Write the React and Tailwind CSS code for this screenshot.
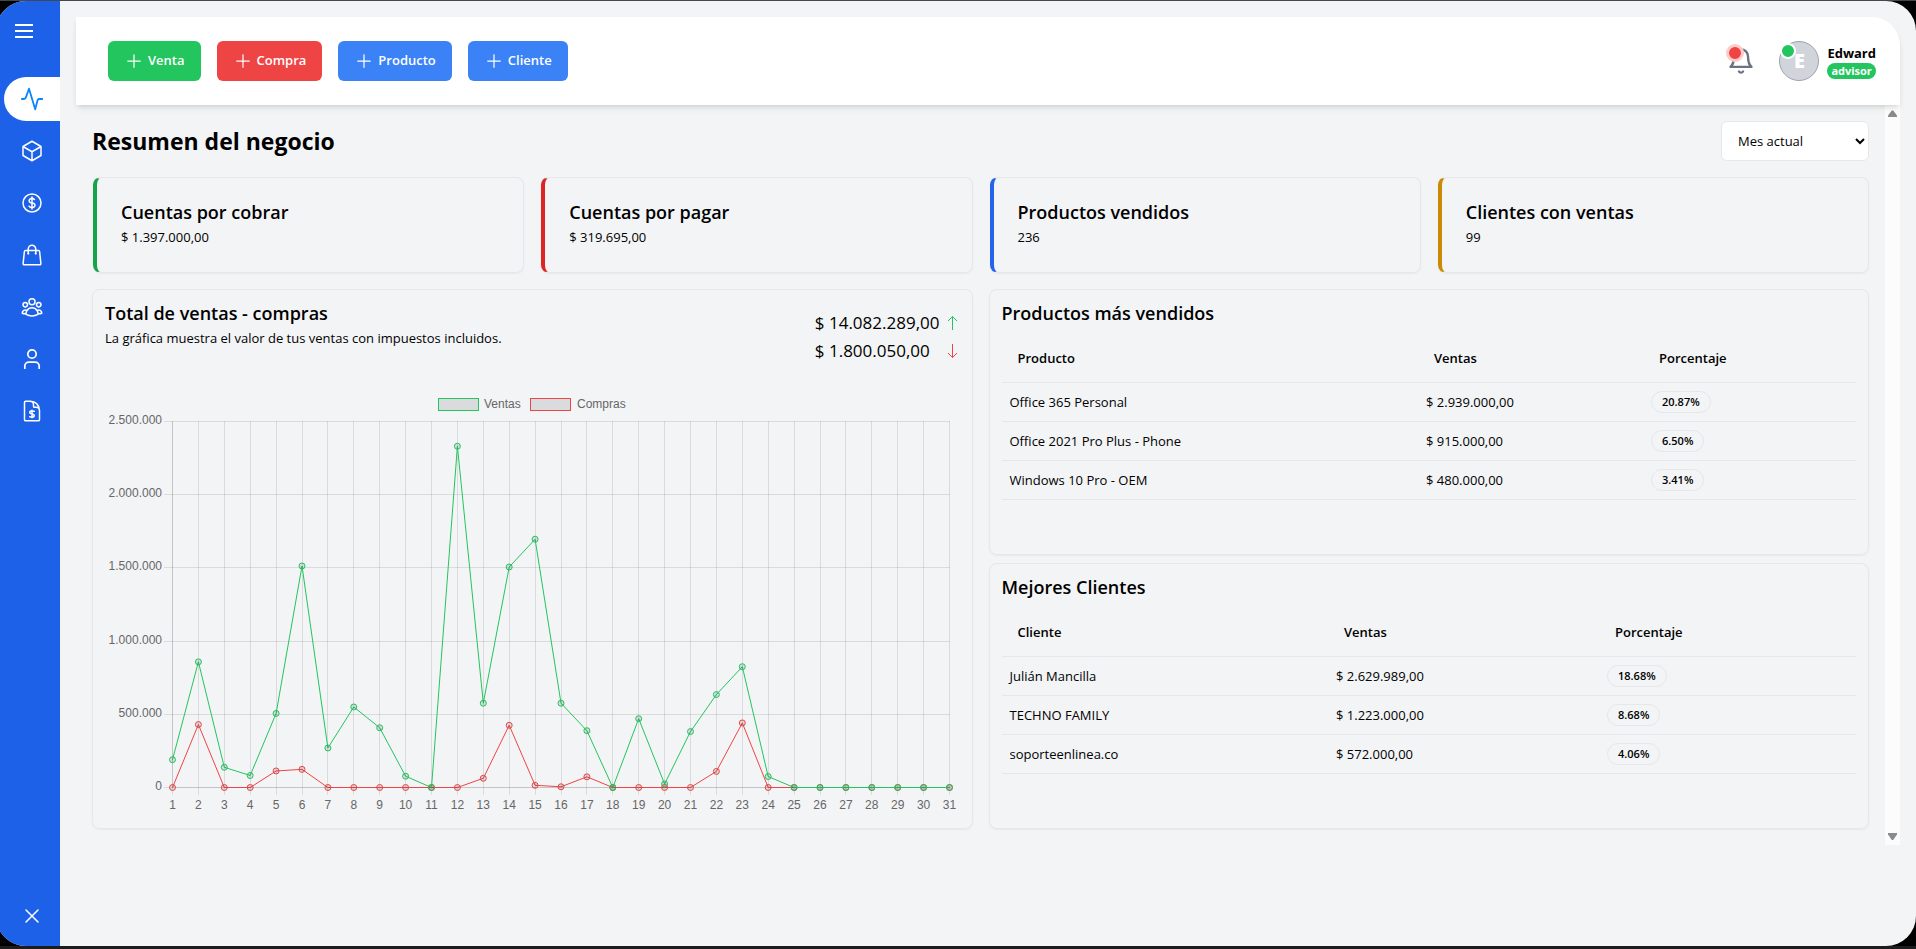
import { useLayoutEffect, useRef, useState } from "react";
import {
  HiOutlineCube,
  HiOutlineCurrencyDollar,
  HiOutlineShoppingBag,
  HiOutlineUserGroup,
  HiOutlineDocumentCurrencyDollar,
  HiOutlineXMark,
  HiOutlinePlus,
} from "react-icons/hi2";
import { FiBell } from "react-icons/fi";

function PulseIcon() {
  return (
    <svg viewBox="0 0 24 24" className="size-6" fill="none" stroke="#0a84ff" strokeWidth="1.8" strokeLinejoin="round">
      <path d="M1.2 12h2.6c1.1 0 1.7-.3 2-1.4L9 1.7l6.2 20.6 2.3-8.7c.3-1.2.8-1.6 1.7-1.6h3.7" />
    </svg>
  );
}

function UserIcon() {
  return (
    <svg viewBox="0 0 24 24" className="size-6" fill="none" stroke="currentColor" strokeWidth="1.7">
      <circle cx="12" cy="7" r="4.2" />
      <path d="M19.2 22v-2.8a4 4 0 0 0-4-4H8.800a4 4 0 0 0-4 4V22" />
    </svg>
  );
}

function MenuIcon() {
  return (
    <svg viewBox="0 0 24 24" className="size-6" fill="none" stroke="currentColor" strokeWidth="2">
      <path d="M3 6h18M3 12h18M3 18h18" />
    </svg>
  );
}

const NAV = [
  { label: "Productos", icon: <HiOutlineCube className="size-6" /> },
  { label: "Ventas", icon: <HiOutlineCurrencyDollar className="size-6" /> },
  { label: "Compras", icon: <HiOutlineShoppingBag className="size-6" /> },
  { label: "Clientes", icon: <HiOutlineUserGroup className="size-6" /> },
  { label: "Usuario", icon: <UserIcon /> },
  { label: "Facturas", icon: <HiOutlineDocumentCurrencyDollar className="size-6" /> },
];

function Sidebar() {
  return (
    <aside className="flex w-16 shrink-0 flex-col bg-[#1d61e8] text-white">
      <button type="button" aria-label="Menú" className="mt-[18px] ml-4 size-6">
        <MenuIcon />
      </button>
      <nav className="mt-[34px] ml-2 flex flex-col gap-2">
        <a href="#" aria-label="Resumen" className="flex h-11 items-center rounded-l-full bg-white pl-4">
          <PulseIcon />
        </a>
        {NAV.map((item) => (
          <a key={item.label} href="#" aria-label={item.label} className="flex h-11 items-center pl-4">
            {item.icon}
          </a>
        ))}
      </nav>
      <button type="button" aria-label="Cerrar sesión" className="mt-auto mb-[18px] ml-6 size-6">
        <HiOutlineXMark className="size-6" />
      </button>
    </aside>
  );
}

const ACTIONS = [
  { label: "Venta", color: "bg-[#22c55e]" },
  { label: "Compra", color: "bg-[#ef4444]" },
  { label: "Producto", color: "bg-[#3b82f6]" },
  { label: "Cliente", color: "bg-[#3b82f6]" },
];

function Header() {
  return (
    <header className="relative z-10 flex h-[88px] items-center justify-between rounded-tr-[28px] bg-white pr-6 pl-8 shadow-md">
      <div className="flex gap-4">
        {ACTIONS.map((a) => (
          <button
            key={a.label}
            type="button"
            className={`flex h-10 items-center gap-1 rounded-md px-4 text-[13px] font-semibold text-white ${a.color}`}
          >
            <HiOutlinePlus className="size-5" />
            {a.label}
          </button>
        ))}
      </div>
      <div className="flex items-center">
        <button type="button" aria-label="Notificaciones" className="relative mr-6 size-7 text-[#6b7280]">
          <FiBell className="size-7" />
          <span className="absolute -top-[3px] -left-px size-[18px] rounded-full border-3 border-[#fecaca] bg-[#ef4444]" />
        </button>
        <div className="relative mr-2 flex size-10 items-center justify-center rounded-full border border-[#9ca3af] bg-[#d1d5db] text-xl font-extrabold text-white">
          E
          <span className="absolute top-px left-0 size-4 rounded-full border-2 border-white bg-[#22c55e]" />
        </div>
        <div className="flex flex-col items-start">
          <span className="text-[13px] leading-5 font-bold">Edward</span>
          <span className="rounded-full bg-[#22c55e] px-1 text-[11px] leading-4 font-bold text-white">advisor</span>
        </div>
      </div>
    </header>
  );
}

const STATS = [
  { title: "Cuentas por cobrar", value: "$ 1.397.000,00", accent: "border-l-[#16a34a]" },
  { title: "Cuentas por pagar", value: "$ 319.695,00", accent: "border-l-[#dc2626]" },
  { title: "Productos vendidos", value: "236", accent: "border-l-[#2563eb]" },
  { title: "Clientes con ventas", value: "99", accent: "border-l-[#ca8a04]" },
];

const VENTAS = [
  190000, 858000, 138000, 82000, 506000, 1513000, 270000, 550000, 408000, 77000, 0, 2331000, 576000, 1506000, 1696000,
  576000, 388000, 0, 470000, 24000, 382000, 635000, 825000, 75000, 0, 0, 0, 0, 0, 0, 0,
];
const COMPRAS = [
  0, 430000, 0, 0, 113000, 124000, 0, 0, 0, 0, 0, 0, 63000, 425000, 15000, 5000, 73000, 0, 0, 0, 0, 110000, 441000, 0, 0,
  0, 0, 0, 0, 0, 0,
];
const TICKS = ["0", "500.000", "1.000.000", "1.500.000", "2.000.000", "2.500.000"];
const MAX = 2500000;

function SalesChart() {
  const ref = useRef(null);
  const [w, setW] = useState(854);
  useLayoutEffect(() => {
    const measure = () => setW(Math.floor(ref.current.getBoundingClientRect().width));
    measure();
    const observer = new ResizeObserver(measure);
    observer.observe(ref.current);
    return () => observer.disconnect();
  }, []);

  const h = Math.round(w / 2);
  const left = 67;
  const right = w - 10;
  const top = 32;
  const bottom = h - 29;
  const px = (i) => left + ((right - left) * i) / 30;
  const py = (v) => bottom - ((bottom - top) * v) / MAX;
  const snap = (n) => Math.round(n) + 0.5;
  const line = (values) => values.map((v, i) => `${px(i) + 0.5},${py(v) + 0.5}`).join(" ");
  const mid = Math.round(w / 2) - 94;

  return (
    <div ref={ref} className="w-full">
      <svg
        width={w}
        height={h}
        role="img"
        aria-label="Ventas y compras por día"
        className="block font-['Liberation_Sans',Arial,sans-serif] text-xs"
      >
        <g fill="#0000001a" strokeWidth="1">
          <rect x={mid + 0.5} y="9.5" width="40" height="12" stroke="#22c55e" />
          <rect x={mid + 92.5} y="9.5" width="40" height="12" stroke="#ef4444" />
        </g>
        <g fill="#666666">
          <text x={mid + 46} y="19">Ventas</text>
          <text x={mid + 139} y="19">Compras</text>
        </g>
        <g stroke="#0000001a">
          {TICKS.map((t, i) => (
            <line key={t} x1={left - 8} x2={right + 1} y1={snap(py(i * 500000))} y2={snap(py(i * 500000))} />
          ))}
          {VENTAS.map((_, i) => (
            <line key={i} x1={snap(px(i))} x2={snap(px(i))} y1={top} y2={bottom + 8} />
          ))}
          <line x1={left + 0.5} x2={left + 0.5} y1={top} y2={bottom} />
          <line x1={left} x2={right} y1={bottom + 0.5} y2={bottom + 0.5} />
        </g>
        <g fill="#666666" textAnchor="end">
          {TICKS.map((t, i) => (
            <text key={t} x={left - 10} y={Math.round(py(i * 500000)) + 3}>{t}</text>
          ))}
        </g>
        <g fill="#666666" textAnchor="middle">
          {VENTAS.map((_, i) => (
            <text key={i} x={px(i) + 0.5} y={bottom + 22}>{i + 1}</text>
          ))}
        </g>
        {[
          { values: COMPRAS, color: "#ef4444" },
          { values: VENTAS, color: "#22c55e" },
        ].map((s) => (
          <g key={s.color} stroke={s.color}>
            <polyline points={line(s.values)} fill="none" strokeWidth="1" />
            {s.values.map((v, i) => (
              <circle key={i} cx={px(i) + 0.5} cy={py(v) + 0.5} r="3" fill="#0000001a" />
            ))}
          </g>
        ))}
      </svg>
    </div>
  );
}

const CARD = "rounded-lg border border-[#e5e7eb] shadow-xs";
const CARD_TITLE = "text-[18px] leading-[22px] font-semibold";

function RankCard({ title, head, cols, rows }) {
  return (
    <section className={`min-h-[266px] flex-1 p-3 ${CARD}`}>
      <h2 className={`mb-[10px] ${CARD_TITLE}`}>{title}</h2>
      <table className="w-full table-fixed text-left text-[13px] leading-[22px]">
        <colgroup>
          {cols.map((c) => (
            <col key={c} className={c} />
          ))}
        </colgroup>
        <thead>
          <tr className="h-12 border-b border-[#e5e7eb]">
            {[head, "Ventas", "Porcentaje"].map((h) => (
              <th key={h} className="px-4 font-semibold">{h}</th>
            ))}
          </tr>
        </thead>
        <tbody>
          {rows.map(([name, amount, pct]) => (
            <tr key={name} className="h-[39px] border-b border-[#e5e7eb]">
              <td className="px-2">{name}</td>
              <td className="px-2">{amount}</td>
              <td className="px-2">
                <span className="inline-flex h-[22px] items-center rounded-full border border-[#e5e7eb] px-[10px] align-middle text-[11px] font-semibold">
                  {pct}
                </span>
              </td>
            </tr>
          ))}
        </tbody>
      </table>
    </section>
  );
}

export default function App() {
  return (
    <div className="flex min-h-screen flex-col border-t border-b-3 border-t-[#46464f] border-b-[#1c1c1e] bg-black font-['Open_Sans','Noto_Sans',sans-serif] text-black">
      <div className="-ml-1 flex flex-1 overflow-hidden rounded-[30px] bg-[#f3f4f6]">
        <Sidebar />
        <main className="min-w-0 flex-1 px-4 pt-4">
          <Header />
          <div className="flex">
            <div className="flex min-w-0 flex-1 flex-col gap-4 p-4">
              <div className="flex h-10 items-center justify-between">
                <h1 className="text-[23px] font-bold">Resumen del negocio</h1>
                <select
                  aria-label="Periodo"
                  className="h-10 w-[148px] rounded-md border border-[#e5e7eb] bg-white px-3 text-[13px]"
                >
                  <option>Mes actual</option>
                </select>
              </div>
              <div className="grid grid-cols-4 gap-4">
                {STATS.map((s) => (
                  <section
                    key={s.title}
                    className={`ml-px flex h-24 flex-col justify-center gap-1 border-l-4 px-6 pb-0.5 ${CARD} ${s.accent}`}
                  >
                    <h2 className={CARD_TITLE}>{s.title}</h2>
                    <p className="text-[13px] leading-5">{s.value}</p>
                  </section>
                ))}
              </div>
              <div className="grid grid-cols-2 gap-4">
                <section className={`flex min-w-0 flex-col justify-between p-3 ${CARD}`}>
                  <div className="flex justify-between">
                    <div>
                      <h2 className={CARD_TITLE}>Total de ventas - compras</h2>
                      <p className="mt-1 text-[13px] leading-5">
                        La gráfica muestra el valor de tus ventas con impuestos incluidos.
                      </p>
                    </div>
                    <div className="grid grid-cols-[auto_auto] items-center gap-x-1 pt-[7px] text-[17px] leading-7">
                      <span>$ 14.082.289,00</span>
                      <svg viewBox="0 0 16 16" className="size-4" fill="none" stroke="#22c55e">
                        <path d="M8.5 15V1.5M4 6l4.500-4.500L13 6" />
                      </svg>
                      <span>$ 1.800.050,00</span>
                      <svg viewBox="0 0 16 16" className="size-4" fill="none" stroke="#ef4444">
                        <path d="M8.5 1v13.5M4 10l4.500 4.500L13 10" />
                      </svg>
                    </div>
                  </div>
                  <SalesChart />
                </section>
                <div className="flex min-w-0 flex-col gap-2">
                  <RankCard
                    title="Productos más vendidos"
                    head="Producto"
                    cols={["w-auto", "w-[225px]", "w-[213px]"]}
                    rows={[
                      ["Office 365 Personal", "$ 2.939.000,00", "20.87%"],
                      ["Office 2021 Pro Plus - Phone", "$ 915.000,00", "6.50%"],
                      ["Windows 10 Pro - OEM", "$ 480.000,00", "3.41%"],
                    ]}
                  />
                  <RankCard
                    title="Mejores Clientes"
                    head="Cliente"
                    cols={["w-auto", "w-[271px]", "w-[257px]"]}
                    rows={[
                      ["Julián Mancilla", "$ 2.629.989,00", "18.68%"],
                      ["TECHNO FAMILY", "$ 1.223.000,00", "8.68%"],
                      ["soporteenlinea.co", "$ 572.000,00", "4.06%"],
                    ]}
                  />
                </div>
              </div>
            </div>
            <div aria-hidden="true" className="flex w-[15px] shrink-0 flex-col items-center justify-between bg-[#fcfcfc] py-1">
              <svg viewBox="0 0 9 9" className="size-[9px]" fill="#8b8b8b">
                <path d="M3.8 1.500h1.400L9 6.500v1.500H0V6.500z" />
              </svg>
              <svg viewBox="0 0 9 9" className="size-[9px]" fill="#8b8b8b">
                <path d="M3.8 8h1.400L9 2.500V1H0v1.500z" />
              </svg>
            </div>
          </div>
        </main>
      </div>
    </div>
  );
}
